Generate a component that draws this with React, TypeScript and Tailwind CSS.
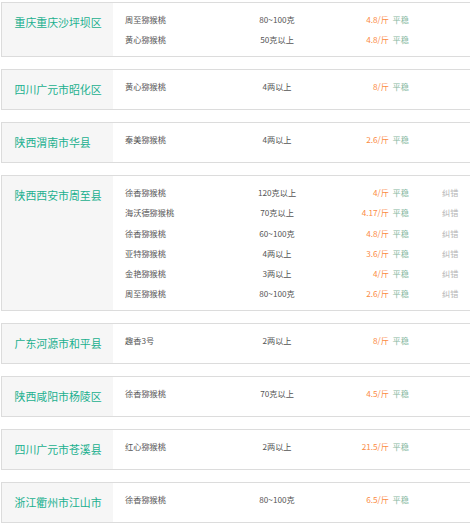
import React from "react";

type Row = { name: string; weight: string; price: string; fix?: boolean };
type Card = { title: string; rows: Row[] };

const data: Card[] = [
  {
    title: "重庆重庆沙坪坝区",
    rows: [
      { name: "周至猕猴桃", weight: "80~100克", price: "4.8/斤" },
      { name: "黄心猕猴桃", weight: "50克以上", price: "4.8/斤" },
    ],
  },
  { title: "四川广元市昭化区", rows: [{ name: "黄心猕猴桃", weight: "4两以上", price: "8/斤" }] },
  { title: "陕西渭南市华县", rows: [{ name: "秦美猕猴桃", weight: "4两以上", price: "2.6/斤" }] },
  {
    title: "陕西西安市周至县",
    rows: [
      { name: "徐香猕猴桃", weight: "120克以上", price: "4/斤", fix: true },
      { name: "海沃德猕猴桃", weight: "70克以上", price: "4.17/斤", fix: true },
      { name: "徐香猕猴桃", weight: "60~100克", price: "4.8/斤", fix: true },
      { name: "亚特猕猴桃", weight: "4两以上", price: "3.6/斤", fix: true },
      { name: "金艳猕猴桃", weight: "3两以上", price: "4/斤", fix: true },
      { name: "周至猕猴桃", weight: "80~100克", price: "2.6/斤", fix: true },
    ],
  },
  { title: "广东河源市和平县", rows: [{ name: "趣香3号", weight: "2两以上", price: "8/斤" }] },
  { title: "陕西咸阳市杨陵区", rows: [{ name: "徐香猕猴桃", weight: "70克以上", price: "4.5/斤" }] },
  { title: "四川广元市苍溪县", rows: [{ name: "红心猕猴桃", weight: "2两以上", price: "21.5/斤" }] },
  { title: "浙江衢州市江山市", rows: [{ name: "徐香猕猴桃", weight: "80~100克", price: "6.5/斤" }] },
];

export default function App() {
  return (
    <div
      className="w-[470px] h-[523px] overflow-hidden bg-white pt-[2px] pl-[1px]"
      style={{ fontFamily: '"Noto Sans CJK SC", "Noto Sans", sans-serif' }}
    >
      <div className="flex flex-col gap-[12px]">
        {data.map((c, i) => (
          <div key={i} className="flex w-[480px] min-h-[41px] border-t border-b border-l border-[#dcdcdc]">
            <div className="w-[111px] shrink-0 bg-[#f6f6f6] pl-[12.5px] pt-[11px] text-[10.9px] leading-[17px] text-[#1ab08e]">
              {c.title}
            </div>
            <div className="flex flex-col pt-[6px] pb-[6.5px]">
              {c.rows.map((r, j) => (
                <div key={j} className="flex h-[20.25px] items-center text-[8.2px] leading-[20.25px] text-[#555]">
                  <div className="w-[112px] pl-[12px]">{r.name}</div>
                  <div className="w-[104px] text-center">{r.weight}</div>
                  <div className="w-[60px] text-right text-[#fb8a43]">{r.price}</div>
                  <div className="w-[53px] pl-[3.5px] text-[#86b8a2]">平稳</div>
                  {r.fix && <div className="text-[#b5b5b5]">纠错</div>}
                </div>
              ))}
            </div>
          </div>
        ))}
      </div>
    </div>
  );
}
